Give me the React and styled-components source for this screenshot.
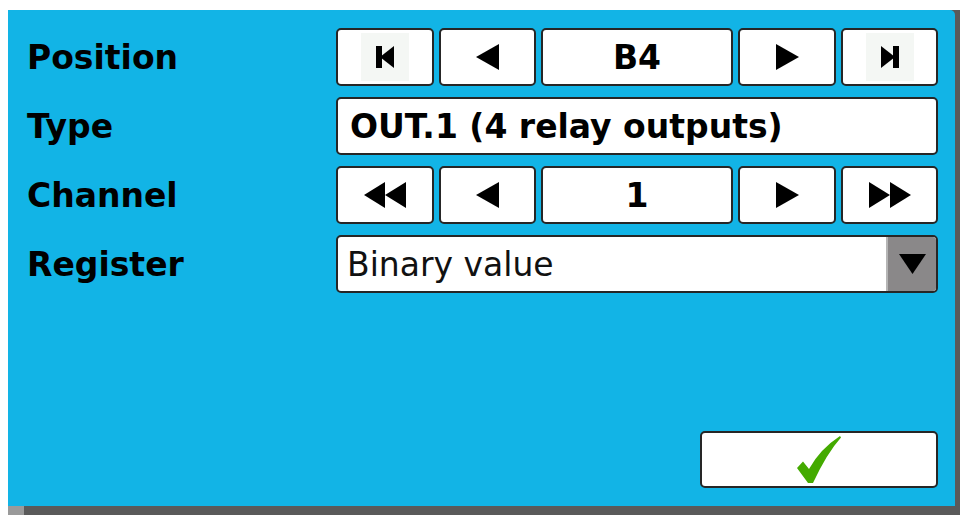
import React from "react";
import styled, { createGlobalStyle } from "styled-components";

const GlobalStyle = createGlobalStyle`
  html, body {
    margin: 0;
    padding: 0;
    background: #fff;
    width: 960px;
    height: 515px;
    overflow: hidden;
  }
  body {
    font-family: "DejaVu Sans", "Liberation Sans", sans-serif;
  }
`;

const Screen = styled.div`
  padding: 10px 0 0 8px;
  width: 952px;
  height: 505px;
`;

const Frame = styled.div`
  display: flex;
  flex-direction: column;
  background: #5a5a5a;
  height: 100%;
`;

const Panel = styled.div`
  width: 947px;
  height: 496px;
  box-sizing: border-box;
  background: #12b4e6;
  border-top-right-radius: 5px;
  padding: 18px 17px 18px 19px;
  display: flex;
  flex-direction: column;
`;

const BottomBar = styled.div`
  display: flex;
  flex: 1;
`;

const Corner = styled.div`
  width: 16px;
  background: #9a9a9a;
`;

const Form = styled.div`
  display: flex;
  flex-direction: column;
  gap: 11px;
`;

const Row = styled.div`
  display: flex;
  align-items: center;
  height: 58px;
`;

const Label = styled.div`
  width: 309px;
  font-size: 33px;
  font-weight: bold;
  color: #000;
`;

const Stepper = styled.div`
  flex: 1;
  display: grid;
  grid-template-columns: 98px 97px 1fr 98px 97px;
  gap: 5px;
  height: 100%;
`;

const Btn = styled.div`
  box-sizing: border-box;
  height: 100%;
  background: #fff;
  border: 2px solid #262626;
  border-radius: 5px;
  display: flex;
  align-items: center;
  justify-content: ${(p) => (p.$left ? "flex-start" : "center")};
  padding: ${(p) => (p.$left ? "0 0 0 12px" : "0")};
  font-size: 33px;
  font-weight: bold;
  color: #000;
  flex: ${(p) => (p.$grow ? 1 : "none")};
`;

const IconPad = styled.div`
  width: 48px;
  height: 48px;
  background: #f4f7f4;
  display: flex;
  align-items: center;
  justify-content: center;
`;

const Select = styled.div`
  flex: 1;
  height: 100%;
  box-sizing: border-box;
  display: flex;
  background: #fff;
  border: 2px solid #262626;
  border-radius: 5px;
  overflow: hidden;
`;

const SelectText = styled.div`
  flex: 1;
  display: flex;
  align-items: center;
  padding-left: 9px;
  font-size: 33px;
  color: #111;
`;

const SelectArrow = styled.div`
  width: 48px;
  background: #8a8889;
  border-left: 2px solid #b5b5b5;
  display: flex;
  align-items: center;
  justify-content: center;
`;

const Footer = styled.div`
  margin-top: auto;
  display: flex;
  justify-content: flex-end;
`;

const OkButton = styled(Btn)`
  width: 238px;
  height: 57px;
`;

const Tri = ({ dir = "left" }) => (
  <svg width="23" height="26" viewBox="0 0 23 26">
    <polygon points={dir === "left" ? "23,0 0,13 23,26" : "0,0 23,13 0,26"} fill="#000" />
  </svg>
);

const Double = ({ dir = "left" }) => (
  <svg width="42" height="26" viewBox="0 0 42 26">
    {dir === "left" ? (
      <>
        <polygon points="21,0 0,13 21,26" fill="#000" />
        <polygon points="42,0 21,13 42,26" fill="#000" />
      </>
    ) : (
      <>
        <polygon points="0,0 21,13 0,26" fill="#000" />
        <polygon points="21,0 42,13 21,26" fill="#000" />
      </>
    )}
  </svg>
);

const Skip = ({ dir = "left" }) => (
  <svg width="18" height="22" viewBox="0 0 18 22" style={dir === "right" ? { transform: "scaleX(-1)" } : undefined}>
    <rect x="0" y="0" width="6" height="22" fill="#000" />
    <polygon points="18,0 4,11 18,22" fill="#000" />
  </svg>
);

const Check = () => (
  <svg width="46" height="48" viewBox="0 0 46 48">
    <path
      d="M1 32 L7 25.5 L13 33 Q24 13 44 0 L45 1.5 Q31 17 17 47 L12 47 Z"
      fill="#44aa00"
    />
  </svg>
);

export default function App() {
  return (
    <>
      <GlobalStyle />
      <Screen>
        <Frame>
          <Panel>
            <Form>
              <Row>
                <Label>Position</Label>
                <Stepper>
                  <Btn>
                    <IconPad>
                      <Skip dir="left" />
                    </IconPad>
                  </Btn>
                  <Btn>
                    <Tri dir="left" />
                  </Btn>
                  <Btn>B4</Btn>
                  <Btn>
                    <Tri dir="right" />
                  </Btn>
                  <Btn>
                    <IconPad>
                      <Skip dir="right" />
                    </IconPad>
                  </Btn>
                </Stepper>
              </Row>
              <Row>
                <Label>Type</Label>
                <Btn $grow $left>OUT.1 (4 relay outputs)</Btn>
              </Row>
              <Row>
                <Label>Channel</Label>
                <Stepper>
                  <Btn>
                    <Double dir="left" />
                  </Btn>
                  <Btn>
                    <Tri dir="left" />
                  </Btn>
                  <Btn>1</Btn>
                  <Btn>
                    <Tri dir="right" />
                  </Btn>
                  <Btn>
                    <Double dir="right" />
                  </Btn>
                </Stepper>
              </Row>
              <Row>
                <Label>Register</Label>
                <Select>
                  <SelectText>Binary value</SelectText>
                  <SelectArrow>
                    <svg width="27" height="20" viewBox="0 0 27 20">
                      <polygon points="0,0 27,0 13.5,20" fill="#000" />
                    </svg>
                  </SelectArrow>
                </Select>
              </Row>
            </Form>
            <Footer>
              <OkButton>
                <Check />
              </OkButton>
            </Footer>
          </Panel>
          <BottomBar>
            <Corner />
          </BottomBar>
        </Frame>
      </Screen>
    </>
  );
}
